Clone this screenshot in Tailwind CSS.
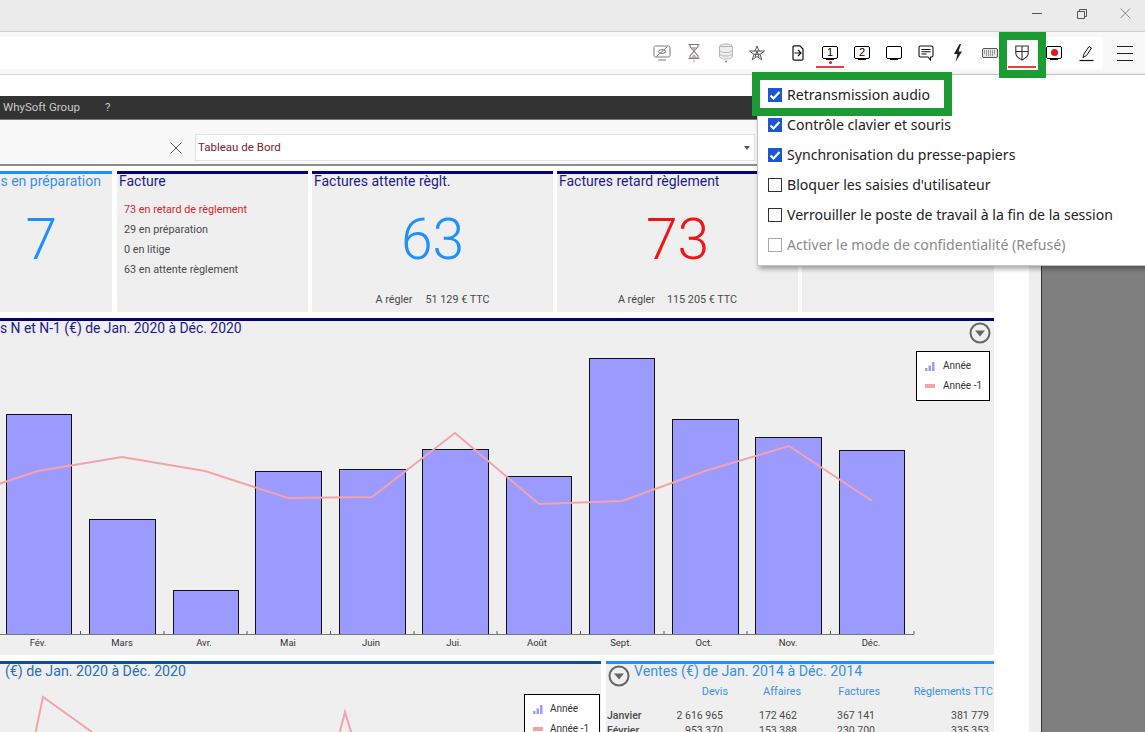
<!DOCTYPE html>
<html lang="fr">
<head>
<meta charset="utf-8">
<script src="https://cdn.jsdelivr.net/npm/@tailwindcss/browser@4"></script>
</head>
<body class="bg-white">
<div class="relative w-[1145px] h-[732px] overflow-hidden bg-white font-['Roboto',sans-serif]">

  <!-- title bar -->
  <div class="h-[32px] bg-[#ebebeb] border-b border-[#cfcfcf] flex justify-end items-center">
    <svg class="w-[135px] h-[31px]" viewBox="0 0 135 31" fill="none">
      <path d="M22 13.500h10" stroke="#555" stroke-width="1"/>
      <path d="M67.500 11.500h7v7h-7zM69.500 11.500v-2h7v7h-2" stroke="#555" stroke-width="1"/>
      <path d="M110.500 8.500l9.500 9.500M120 8.500l-9.500 9.500" stroke="#8a8a8a" stroke-width="1"/>
    </svg>
  </div>

  <!-- toolbar -->
  <div class="h-[43px] bg-[#f8f8f8] border-b border-[#d4d4d4] pt-[5px]">
    <div class="flex items-start">
      <div class="w-[1103px] h-[32px] bg-white rounded-r-[3px] flex justify-end items-start pr-[1px]">
        <div class="flex items-center w-[128px] h-[32px] opacity-70">
          <div class="w-8 flex justify-center">
            <svg class="w-[18px] h-[18px]" viewBox="0 0 18 18" fill="none" stroke="#444" stroke-width="1"><rect x="1" y="2" width="16" height="11" rx="1.500"/><path d="M5 16h8M3.500 12.500L14 3"/><path d="M5 7.500c2-2.500 6-2.500 8 0c-2 2.500-6 2.500-8 0z"/></svg>
          </div>
          <div class="w-8 flex justify-center">
            <svg class="w-[14px] h-[20px]" viewBox="0 0 14 20" fill="none" stroke="#444" stroke-width="1.100"><path d="M1.500 1.500h11M1.500 15.500h11"/><path d="M3 2v1.500L11 13v2M11 2v1.500L3 13v2" /><path d="M4 4h6L7 8z" fill="#999" stroke="none"/><path d="M3.500 15L7 11l3.500 4z" fill="#999" stroke="none"/><circle cx="7" cy="18" r="1.200" fill="#f4a0a0" stroke="none"/></svg>
          </div>
          <div class="w-8 flex justify-center">
            <svg class="w-[16px] h-[20px]" viewBox="0 0 16 20" fill="none" stroke="#999" stroke-width="1"><ellipse cx="8" cy="3.500" rx="6.500" ry="2.500" fill="#ddd"/><path d="M1.500 3.500v10c0 1.500 3 2.500 6.500 2.500s6.500-1 6.500-2.500v-10z" fill="#e6e6e6"/><path d="M1.500 7c0 1.500 3 2.500 6.500 2.500s6.500-1 6.500-2.500M1.500 10.500c0 1.500 3 2.500 6.500 2.500s6.500-1 6.500-2.500"/><circle cx="8" cy="18.500" r="1" fill="#e01818" stroke="none"/></svg>
          </div>
          <div class="w-8 flex justify-start pl-[7px]">
            <svg class="w-[16px] h-[16px] shrink-0" viewBox="0 0 16 16" fill="none" stroke="#111" stroke-width="1"><path d="M8 1l2 5h5.500l-4.500 3.300 1.800 5.500L8 11.500l-4.800 3.300L5 9.300.5 6H6z"/><path d="M5.500 6h5M5 9.300h6M6 12l2-6 2 6"/></svg>
          </div>
        </div>
        <div class="w-2"></div>
        <div class="w-8 h-[32px] flex items-center justify-center">
          <svg class="w-[12px] h-[16px]" viewBox="0 0 12 16" fill="none" stroke="#111" stroke-width="1.200"><path d="M1 2a1.200 1.200 0 0 1 1.200-1.200H8L11 4v10a1.200 1.200 0 0 1-1.200 1.200H2.200A1.200 1.200 0 0 1 1 14z"/><path d="M2.500 8h6.500M6 5l3 3-3 3"/></svg>
        </div>
        <div class="w-8 h-[32px] flex flex-col items-center">
          <div class="w-[14px] h-[11px] mt-[9px] border border-black rounded-[2px] flex items-center justify-center text-[11px] leading-none text-black font-['Liberation_Sans',sans-serif] box-content">1</div>
          <div class="w-[8px] h-px bg-black"></div>
          <div class="w-[3px] h-[3px] mt-[1px] rounded-full bg-[#e01818]"></div>
          <div class="w-[28px] h-[2px] mt-[2px] bg-[#ea3d3d]"></div>
        </div>
        <div class="w-8 h-[32px] flex flex-col items-center">
          <div class="w-[14px] h-[11px] mt-[9px] border border-black rounded-[2px] flex items-center justify-center text-[11px] leading-none text-black font-['Liberation_Sans',sans-serif] box-content">2</div>
          <div class="w-[8px] h-px bg-black"></div>
        </div>
        <div class="w-8 h-[32px] flex flex-col items-center">
          <div class="w-[14px] h-[11px] mt-[9px] border border-black rounded-[2px] box-content"></div>
          <div class="w-[8px] h-px bg-black"></div>
        </div>
        <div class="w-8 h-[32px] flex items-center justify-center">
          <svg class="w-[16px] h-[16px]" viewBox="0 0 16 16" fill="none" stroke="#111" stroke-width="1.100"><path d="M1 2.500A1.500 1.500 0 0 1 2.500 1h11A1.500 1.500 0 0 1 15 2.500v8a1.500 1.500 0 0 1-1.500 1.500H12.500v3L10 12H2.500A1.500 1.500 0 0 1 1 10.500z"/><path d="M3.500 4.500h9M3.500 6.800h9M3.500 9h5"/></svg>
        </div>
        <div class="w-8 h-[32px] flex items-center justify-center">
          <svg class="w-[10px] h-[18px]" viewBox="0 0 10 18"><path d="M6.500 0L1 10h3.500L2.500 18l6.500-10.500H5.500L8 0z" fill="#222"/></svg>
        </div>
        <div class="w-8 h-[32px] flex items-center justify-center">
          <svg class="w-[16px] h-[10px]" viewBox="0 0 16 10" fill="none" stroke="#555" stroke-width="1"><rect x=".5" y=".5" width="15" height="9" rx="1.500" fill="#e4e4e4"/><path d="M2 3h12M2 5h12M4 7h8" stroke="#555" stroke-dasharray="1 1"/></svg>
        </div>
        <div class="w-8 h-[32px] flex flex-col items-center">
          <svg class="w-[14px] h-[16px] mt-[8px]" viewBox="0 0 14 16" fill="none" stroke="#333" stroke-width="1.100"><path d="M.8 1h12.400v7.500c0 3-3 4.800-6.200 6.500C3.800 13.300.8 11.500.8 8.500zM7 1v14M.8 6.500h12.400"/></svg>
          <div class="w-[28px] h-[2px] mt-[5px] bg-[#ea3d3d]"></div>
        </div>
        <div class="w-8 h-[32px] flex flex-col items-center">
          <div class="w-[14px] h-[11px] mt-[9px] border border-black rounded-[2px] flex items-center justify-center box-content">
            <div class="w-[7px] h-[7px] rounded-full bg-[#e01818]"></div>
          </div>
          <div class="w-[8px] h-px bg-black"></div>
        </div>
        <div class="w-8 h-[32px] flex items-center justify-center">
          <svg class="w-[15px] h-[17px]" viewBox="0 0 15 17" fill="none" stroke="#111" stroke-width="1"><path d="M4 12.500l1-3.500L10 1.500l2.500 1.500L7.500 10.500z"/><path d="M.5 15.500h14" stroke-width="1.200"/></svg>
        </div>
      </div>
      <div class="flex-1 flex flex-col items-center gap-[6px] pt-[9px] pl-[2px]">
        <div class="w-[16px] h-px bg-[#222]"></div>
        <div class="w-[16px] h-px bg-[#222]"></div>
        <div class="w-[16px] h-px bg-[#222]"></div>
      </div>
    </div>
  </div>

  <!-- page -->
  <div class="flex h-[657px]">
    <div class="w-[1029px] shrink-0">
      <div class="h-[21px]"></div>
      <div class="h-[24px] bg-[#333333] border-b border-[#777] flex items-center text-[11.500px] text-[#c9c9c9]">
        <span class="ml-[3px]">WhySoft Group</span>
        <span class="ml-[25px]">?</span>
      </div>
      <div class="h-[46px] bg-[#f8f8f8] border-b-2 border-[#8c8c8c] flex items-start pt-[14px]">
        <svg class="ml-[170px] mt-[8px] w-[12px] h-[12px]" viewBox="0 0 12 12" fill="none" stroke="#555"><path d="M.5.500l11 11M11.500.500l-11 11"/></svg>
        <div class="ml-[13px] w-[560px] h-[27px] bg-white border border-[#e2e2e2] flex items-center justify-between px-[2px] text-[11.500px] text-[#7b2233]">
          <span>Tableau de Bord</span>
          <span class="w-0 h-0 mr-[2px] border-x-[3px] border-x-transparent border-t-[4px] border-t-[#555]"></span>
        </div>
      </div>

      <div class="flex gap-[4px] w-[994px] mt-[5px] h-[141px]">
        <div class="w-[112px] bg-[#efefef] border-t-[3px] border-[#1e90ff] flex flex-col items-end pr-[11px]">
          <div class="-mt-px text-[14px] leading-[17px] text-[#3a90e8] whitespace-nowrap">s en préparation</div>
          <div class="w-full text-right pr-[44px] mt-[15px] text-[57px] leading-[70px] font-light text-[#1e90ff]">7</div>
        </div>
        <div class="w-[191px] ml-[1px] bg-[#efefef] border-t-[3px] border-[#000080] pl-[2px]">
          <div class="-mt-px text-[14px] leading-[17px] text-[#1d1d85]">Facture</div>
          <div class="mt-[10px] pl-[5px] text-[10.800px] leading-[20px] text-[#4a4a4a]">
            <div class="text-[#d81f26]">73 en retard de règlement</div>
            <div>29 en préparation</div>
            <div>0 en litige</div>
            <div>63 en attente règlement</div>
          </div>
        </div>
        <div class="w-[241px] bg-[#efefef] border-t-[3px] border-[#000080] flex flex-col">
          <div class="-mt-px pl-[2px] text-[14px] leading-[17px] text-[#1d1d85]">Factures attente règlt.</div>
          <div class="mt-[15px] text-center text-[57px] leading-[70px] font-light text-[#1e90ff]">63</div>
          <div class="mt-auto mb-[5px] flex justify-center gap-[13px] text-[10.800px] leading-[14px] text-[#4a4a4a]"><span>A régler</span><span>51 129 € TTC</span></div>
        </div>
        <div class="w-[241px] bg-[#efefef] border-t-[3px] border-[#000080] flex flex-col">
          <div class="-mt-px pl-[2px] text-[14px] leading-[17px] text-[#1d1d85]">Factures retard règlement</div>
          <div class="mt-[15px] text-center text-[57px] leading-[70px] font-light text-[#f01515]">73</div>
          <div class="mt-auto mb-[5px] flex justify-center gap-[12px] text-[10.800px] leading-[14px] text-[#4a4a4a]"><span>A régler</span><span>115 205 € TTC</span></div>
        </div>
        <div class="flex-1 bg-[#efefef] border-t-[3px] border-[#000080]"></div>
      </div>

      <!-- main chart -->
      <div class="relative w-[994px] h-[337px] mt-[6px] bg-[#efefef] border-t-[3px] border-[#000080]">
        <div class="-mt-px text-[13.900px] leading-[17px] text-[#1d1d85] whitespace-nowrap">s N et N-1 (€) de Jan. 2020 à Déc. 2020</div>
        <svg class="absolute left-[969px] top-[1px] w-[22px] h-[22px]" viewBox="0 0 22 22"><circle cx="11" cy="11" r="9.500" fill="none" stroke="#666" stroke-width="2"/><path d="M6 8.500h10l-5 6z" fill="#666"/></svg>
        <svg class="absolute left-0 top-[14px] w-[994px] h-[320px]" viewBox="0 335 994 320">
          <g fill="#9a9aff" stroke="#111" stroke-width="1">
            <rect x="6.500" y="414.500" width="65" height="220"/>
            <rect x="89.500" y="519.500" width="66" height="115"/>
            <rect x="173.500" y="590.500" width="65" height="44"/>
            <rect x="255.500" y="471.500" width="66" height="163"/>
            <rect x="339.500" y="469.500" width="66" height="165"/>
            <rect x="422.500" y="449.500" width="66" height="185"/>
            <rect x="506.500" y="476.500" width="65" height="158"/>
            <rect x="589.500" y="358.500" width="65" height="276"/>
            <rect x="672.500" y="419.500" width="66" height="215"/>
            <rect x="755.500" y="437.500" width="66" height="197"/>
            <rect x="839.500" y="450.500" width="65" height="184"/>
          </g>
          <path d="M0 634.500H914" stroke="#777" stroke-width="1"/>
          <path d="M80.500 631v3M164 631v3M247 631v3M330.500 631v3M414 631v3M497 631v3M580.500 631v3M664 631v3M747 631v3M830.500 631v3M914 631v3" stroke="#555" stroke-width="1"/>
          <polyline fill="none" stroke="#f4a3a8" stroke-width="2" points="-10,487 38,471 122,457 205,471 288,498 372,497 455,433 539,504 622,501 705,471 789,446 872,501"/>
          <g font-size="9.500" fill="#333" text-anchor="middle">
            <text x="38" y="645.500">Fév.</text>
            <text x="122" y="645.500">Mars</text>
            <text x="204" y="645.500">Avr.</text>
            <text x="288" y="645.500">Mai</text>
            <text x="371" y="645.500">Juin</text>
            <text x="454" y="645.500">Jui.</text>
            <text x="537" y="645.500">Août</text>
            <text x="621" y="645.500">Sept.</text>
            <text x="704" y="645.500">Oct.</text>
            <text x="788" y="645.500">Nov.</text>
            <text x="871" y="645.500">Déc.</text>
          </g>
        </svg>
        <div class="absolute left-[916px] top-[30px] w-[74px] h-[50px] bg-white border border-black text-[10px] text-[#333] leading-none">
          <div class="flex items-center h-[20px] mt-[4px] pl-[8px] gap-[8px]">
            <svg class="w-[10px] h-[10px]" viewBox="0 0 10 10" fill="#9a9aff"><path d="M0 7h2.500v3H0zM3.500 4.500H6V10H3.500zM7 1h2.500v9H7z"/></svg>Année
          </div>
          <div class="flex items-center h-[20px] pl-[8px] gap-[8px]">
            <div class="w-[10px] h-[4px] bg-[#f4a3a8]"></div>Année -1
          </div>
        </div>
      </div>

      <!-- bottom row -->
      <div class="flex gap-[5px] w-[994px] mt-[6px]">
        <div class="relative w-[601px] h-[80px] bg-[#efefef] border-t-[3px] border-[#0d4f9e]">
          <div class="-mt-px pl-[5px] text-[14.200px] leading-[17px] text-[#2a6fb8]">(€) de Jan. 2020 à Déc. 2020</div>
          <svg class="absolute left-0 top-0 w-[601px] h-[77px]" viewBox="0 664 601 77">
            <path d="M35 735L43 697L92 732M339 735L345 712L352 735" fill="none" stroke="#f4a3a8" stroke-width="2"/>
          </svg>
          <div class="absolute left-[524px] top-[30px] w-[76px] h-[50px] bg-white border border-black text-[10px] text-[#333] leading-none">
            <div class="flex items-center h-[20px] mt-[4px] pl-[8px] gap-[7px]">
              <svg class="w-[10px] h-[10px]" viewBox="0 0 10 10" fill="#9a9aff"><path d="M0 7h2.500v3H0zM3.500 4.500H6V10H3.500zM7 1h2.500v9H7z"/></svg>Année
            </div>
            <div class="flex items-center h-[20px] pl-[8px] gap-[7px]">
              <div class="w-[10px] h-[4px] bg-[#f4a3a8]"></div>Année -1
            </div>
          </div>
        </div>
        <div class="flex-1 h-[80px] bg-[#efefef] border-t-[3px] border-[#1e90ff] overflow-hidden">
          <div class="flex h-[18px] items-start">
            <svg class="ml-[2px] mt-[1px] w-[22px] h-[22px] shrink-0" viewBox="0 0 22 22"><circle cx="11" cy="11" r="9.500" fill="none" stroke="#666" stroke-width="2"/><path d="M6 8.500h10l-5 6z" fill="#666"/></svg>
            <div class="ml-[4px] -mt-px text-[14.200px] leading-[17px] text-[#3a90e8] whitespace-nowrap">Ventes (€) de Jan. 2014 à Déc. 2014</div>
          </div>
          <div class="grid grid-cols-[122px_73px_79px_114px] text-[10.800px] leading-[15px] text-right mt-[2px] whitespace-nowrap">
            <div class="text-[#3a90e8]">Devis</div>
            <div class="text-[#3a90e8]">Affaires</div>
            <div class="text-[#3a90e8]">Factures</div>
            <div class="text-[#3a90e8] pr-[1px]">Règlements TTC</div>
          </div>
          <div class="grid grid-cols-[117px_74px_78px_114px] text-[10.500px] leading-[15px] text-right mt-[9px] text-[#4a4a4a] whitespace-nowrap">
            <div class="flex justify-between pl-[1px]"><span class="font-medium">Janvier</span><span>2 616 965</span></div>
            <div>172 462</div><div>367 141</div><div>381 779</div>
            <div class="flex justify-between pl-[1px]"><span class="font-medium">Février</span><span>953 370</span></div>
            <div>153 388</div><div>230 700</div><div>335 353</div>
          </div>
        </div>
      </div>
    </div>
    <div class="flex-1 flex">
      <div class="w-[12px] bg-[#eeeeee]"></div>
      <div class="flex-1 bg-[#7f7f7f] border-l border-[#333]"></div>
    </div>
  </div>

  <!-- dropdown menu -->
  <div class="absolute left-[757px] top-[74px] w-[400px] h-[192px] bg-white border border-[#c4c4c4] shadow-[2px_3px_5px_rgba(0,0,0,0.35)] pt-[5px] pl-[10px] text-[14.100px] font-['Noto_Sans',sans-serif] text-[#222]">
    <div class="flex items-center h-[30px] gap-[5px]"><span class="w-[14px] h-[14px] bg-[#1a56d6] flex items-center justify-center"><svg class="w-[12px] h-[12px]" viewBox="0 0 12 12" fill="none" stroke="#fff" stroke-width="2.200"><path d="M1.500 6.500l3 3 6-6.500"/></svg></span>Retransmission audio</div>
    <div class="flex items-center h-[30px] gap-[5px]"><span class="w-[14px] h-[14px] bg-[#1a56d6] flex items-center justify-center"><svg class="w-[12px] h-[12px]" viewBox="0 0 12 12" fill="none" stroke="#fff" stroke-width="2.200"><path d="M1.500 6.500l3 3 6-6.500"/></svg></span>Contrôle clavier et souris</div>
    <div class="flex items-center h-[30px] gap-[5px]"><span class="w-[14px] h-[14px] bg-[#1a56d6] flex items-center justify-center"><svg class="w-[12px] h-[12px]" viewBox="0 0 12 12" fill="none" stroke="#fff" stroke-width="2.200"><path d="M1.500 6.500l3 3 6-6.500"/></svg></span>Synchronisation du presse-papiers</div>
    <div class="flex items-center h-[30px] gap-[5px]"><span class="w-[14px] h-[14px] bg-white border border-[#333]"></span>Bloquer les saisies d'utilisateur</div>
    <div class="flex items-center h-[30px] gap-[5px]"><span class="w-[14px] h-[14px] bg-white border border-[#333]"></span>Verrouiller le poste de travail à la fin de la session</div>
    <div class="flex items-center h-[30px] gap-[5px] text-[#8a8a8a]"><span class="w-[14px] h-[14px] bg-white border border-[#aaa]"></span>Activer le mode de confidentialité (Refusé)</div>
  </div>

  <!-- green annotation frames -->
  <div class="absolute left-[752px] top-[72px] w-[200px] h-[44px] border-[8px] border-[#1a9c32]"></div>
  <div class="absolute left-[999px] top-[32px] w-[47px] h-[46px] border-[8px] border-[#1a9c32]"></div>
</div>
</body>
</html>
